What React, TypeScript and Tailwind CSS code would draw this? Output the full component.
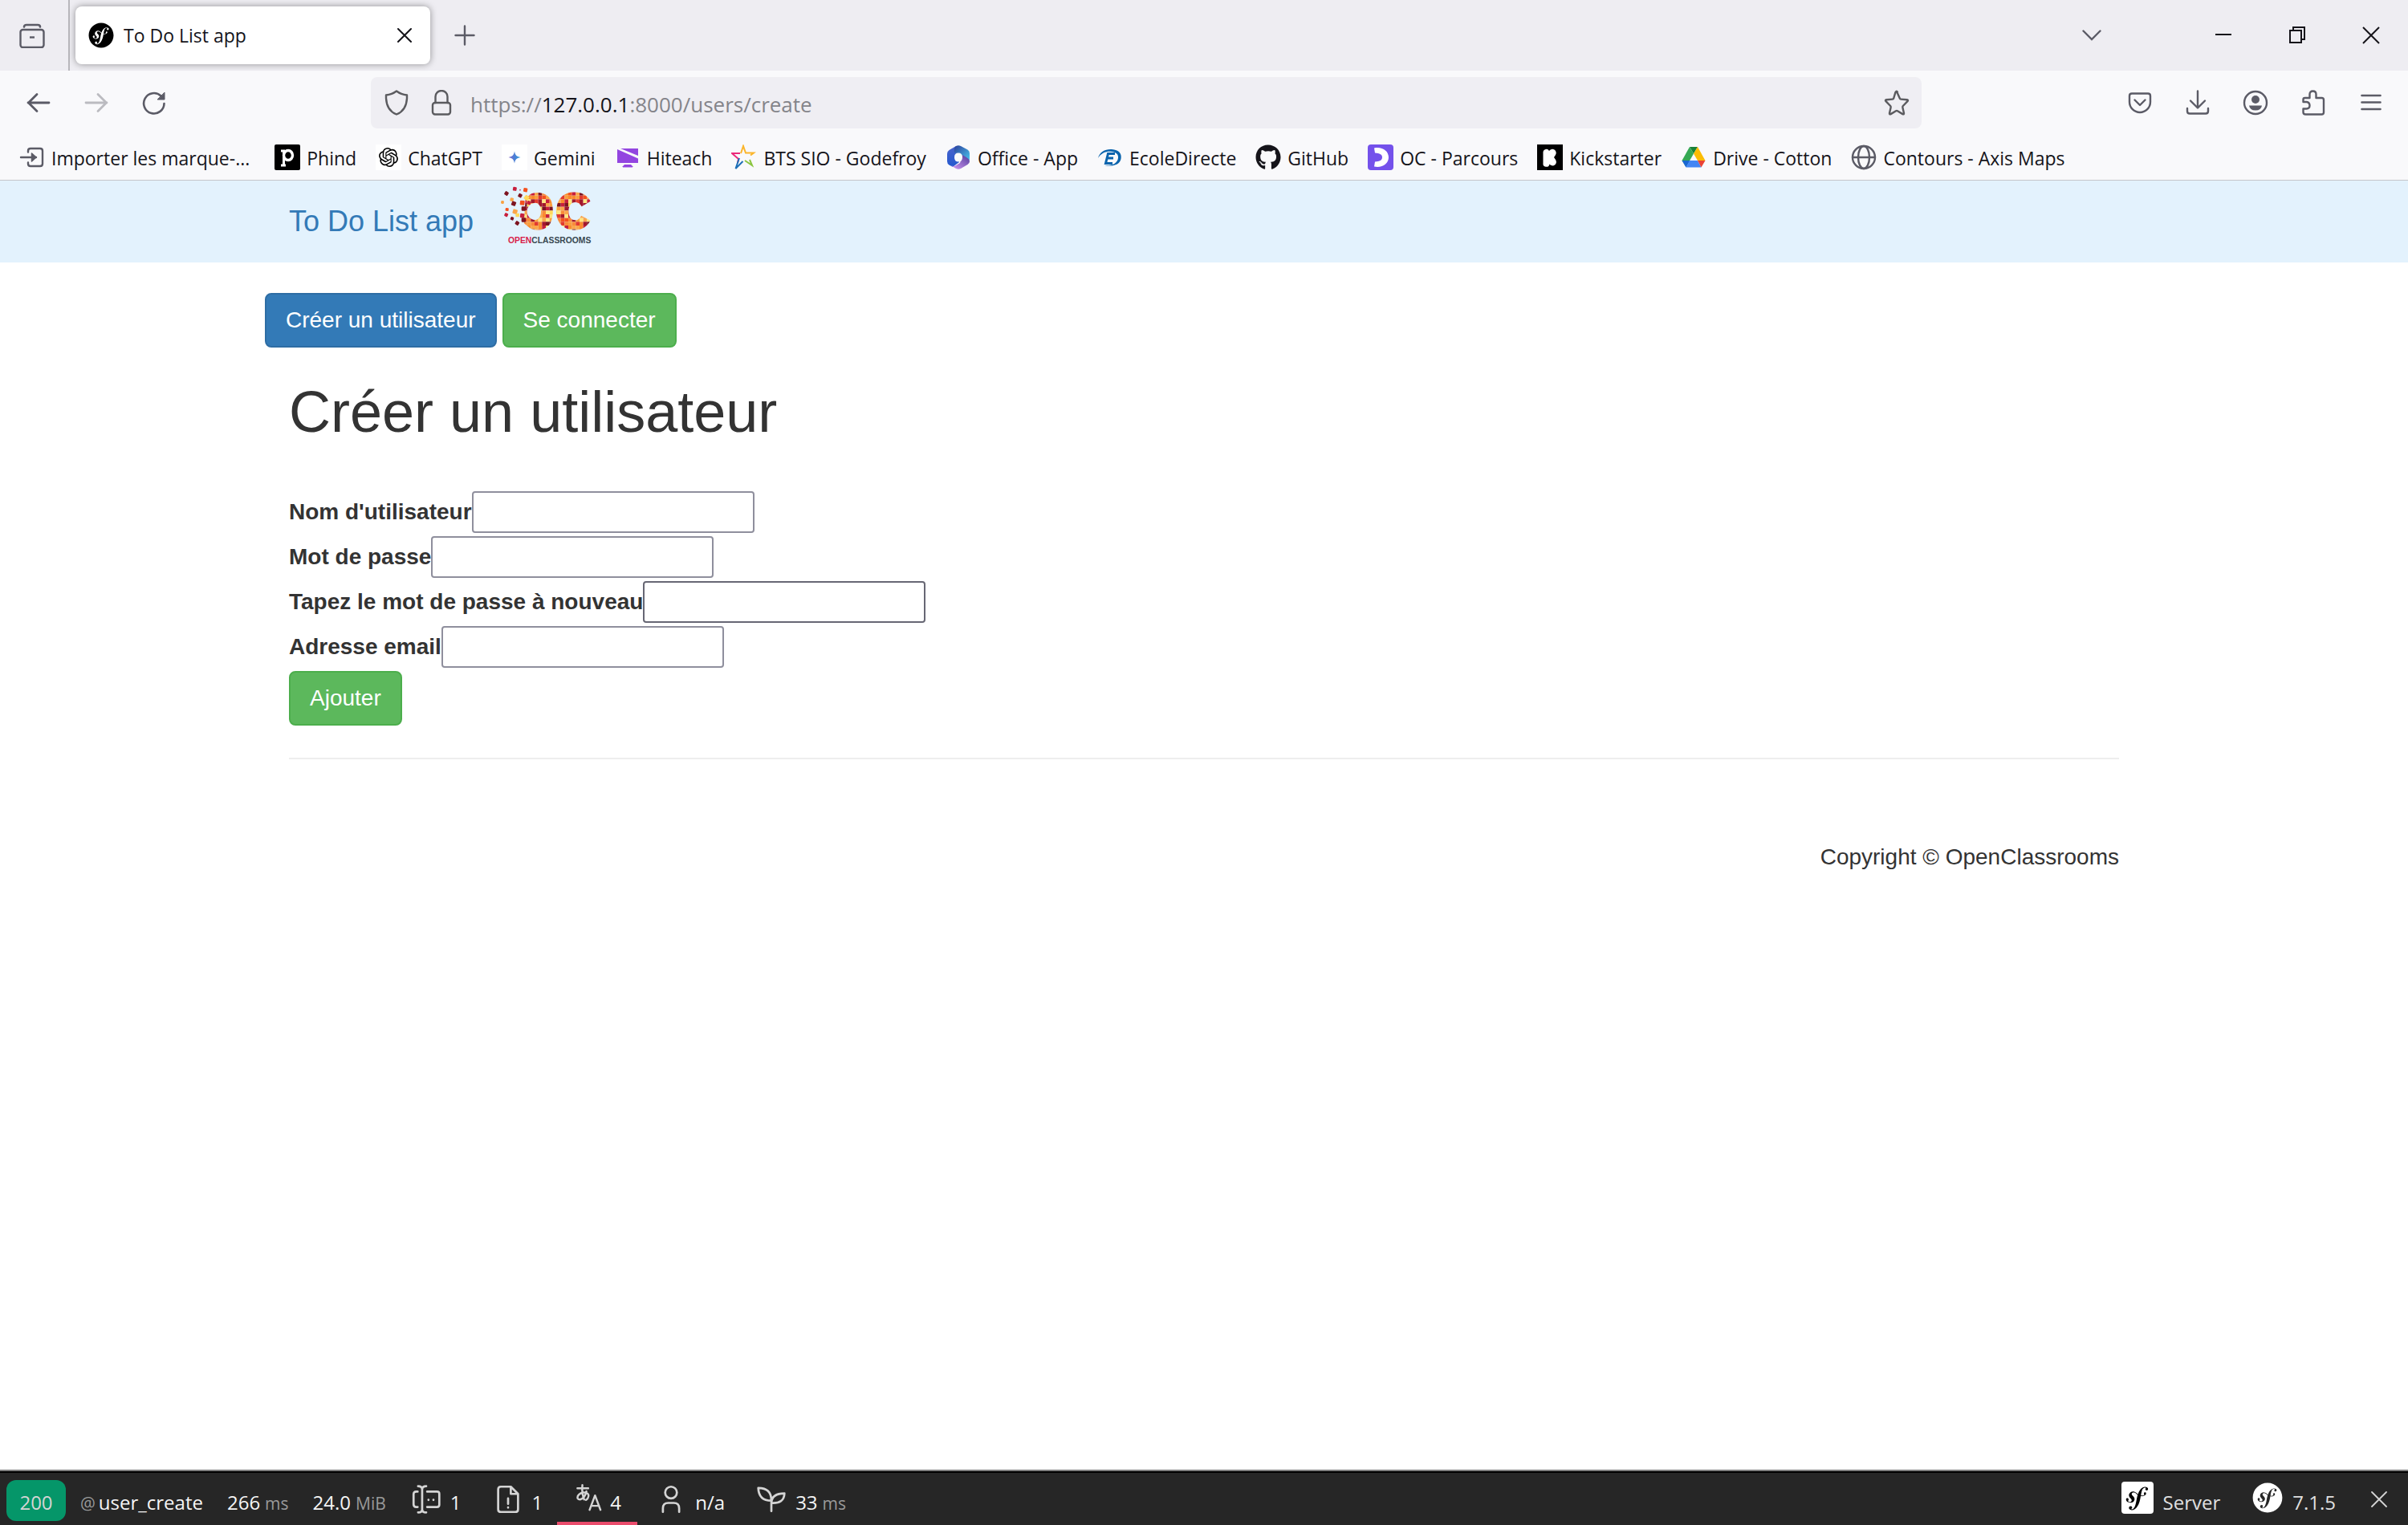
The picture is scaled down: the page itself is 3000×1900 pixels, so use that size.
import type { ReactNode } from 'react';
import { FaSymfony, FaGithub } from 'react-icons/fa';
import { SiOpenai } from 'react-icons/si';

type IconProps = { className?: string; children: ReactNode };

/* Line icon drawn on a 32-unit grid */
function Line({ className = 'size-8', children }: IconProps) {
  return (
    <svg viewBox="0 0 32 32" className={`shrink-0 ${className}`} fill="none" stroke="currentColor" strokeWidth="2.4" strokeLinecap="round" strokeLinejoin="round" aria-hidden="true">
      {children}
    </svg>
  );
}

function Art({ children }: IconProps) {
  return (
    <svg viewBox="0 0 32 32" className="size-8 shrink-0" aria-hidden="true">
      {children}
    </svg>
  );
}

const bookmarks: { label: string; icon: ReactNode }[] = [
  {
    label: 'Phind',
    icon: (
      <Art>
        <rect width="32" height="32" rx="2" fill="#000" />
        <path d="M8 8h3.5v18M8 26h6" fill="none" stroke="#fff" strokeWidth="3" />
        <ellipse cx="17" cy="13.5" rx="5.5" ry="6" fill="none" stroke="#fff" strokeWidth="3.4" />
      </Art>
    ),
  },
  {
    label: 'ChatGPT',
    icon: (
      <span className="flex size-8 shrink-0 items-center justify-center bg-white text-black">
        <SiOpenai className="size-6" />
      </span>
    ),
  },
  {
    label: 'Gemini',
    icon: (
      <Art>
        <defs>
          <linearGradient id="gem" x1="0" x2="1">
            <stop offset="0" stopColor="#8668c9" />
            <stop offset=".5" stopColor="#4a7fd6" />
            <stop offset="1" stopColor="#36a3dd" />
          </linearGradient>
        </defs>
        <rect width="32" height="32" fill="#fff" />
        <path d="M16 8.500c1 5 2.500 6.500 7.500 7.500-5 1-6.500 2.500-7.500 7.500-1-5-2.500-6.500-7.500-7.500 5-1 6.500-2.500 7.500-7.500z" fill="url(#gem)" />
      </Art>
    ),
  },
  {
    label: 'Hiteach',
    icon: (
      <Art>
        <path d="M7 5h22v9zM3 6l26 11.500V23H3zM12 25h8l3 3H9z" fill="#9345e0" />
        <path d="M10 28.500h12" stroke="#c9a3f0" strokeWidth="1" />
      </Art>
    ),
  },
  {
    label: 'BTS SIO - Godefroy',
    icon: (
      <Art>
        <g fill="none" strokeWidth="2" strokeLinejoin="miter">
          <path d="M12 11l3-9 3 8.500h10l-4 3" stroke="#fbb52b" />
          <path d="M11 11H1l8 7-1 5" stroke="#ec2a7b" />
          <path d="M10 17L5.500 30l9-9" stroke="#1d6fb7" />
          <path d="M17 20l9 6-3-7" stroke="#8bc540" />
        </g>
      </Art>
    ),
  },
  {
    label: 'Office - App',
    icon: (
      <Art>
        <defs>
          <linearGradient id="ofa" x1="0" y1="0" x2="0" y2="1">
            <stop offset="0" stopColor="#4a63cc" />
            <stop offset="1" stopColor="#2358cf" />
          </linearGradient>
          <linearGradient id="ofb" x1="0" y1="0" x2="1" y2="1">
            <stop offset="0" stopColor="#2b3f9c" />
            <stop offset="1" stopColor="#4cc9f0" />
          </linearGradient>
          <linearGradient id="ofc" x1="1" y1="0" x2="0" y2="1">
            <stop offset="0" stopColor="#4f3a9b" />
            <stop offset="1" stopColor="#d59bf4" />
          </linearGradient>
        </defs>
        <path d="M13 2L4.500 7Q2 8.500 2 11.500V21q0 3 2.500 4.500L9 28l8-6V9z" fill="url(#ofa)" />
        <path d="M13 2q3-1.500 6 0l8.500 4.500Q30 8 30 11v10q0-2-2-3l-12-6-5-2q-1-6 2-8z" fill="url(#ofb)" />
        <path d="M21 13l6.500 4Q30 18.500 30 21q0 2.500-2.500 4L19 30q-3 1.500-6 0l-6-3.500q4 1 6-.5l5-3z" fill="url(#ofc)" />
        <path d="M16 10.500q5 0 5 5.500t-5 5.500-5-5.500 5-5.500z" fill="#f9f9fb" />
      </Art>
    ),
  },
  {
    label: 'EcoleDirecte',
    icon: (
      <Art>
        <path d="M1 17C3 9 10 5.500 18 6c9 .5 13 5.500 11.500 12C28 25 20 28 9 26c11 .5 16-3 17-9 .8-5-3-8-9.500-8.300C10 8.500 4.500 11 1 17z" fill="#0b64ad" />
        <path d="M22 11.500h-8.500l-3 12H19M12.500 17H20" fill="none" stroke="#0b64ad" strokeWidth="3" />
      </Art>
    ),
  },
  { label: 'GitHub', icon: <FaGithub className="size-8 shrink-0 text-[#15141a]" /> },
  {
    label: 'OC - Parcours',
    icon: (
      <Art>
        <rect width="32" height="32" rx="4" fill="#7451eb" />
        <path d="M8 4.500C18 2.500 26 8 26 16S18 29.500 8 27.500l1-6c6-.5 9-2 9-5.500s-3-5-9-5.500z" fill="#fff" />
      </Art>
    ),
  },
  {
    label: 'Kickstarter',
    icon: (
      <Art>
        <rect width="32" height="32" fill="#000" />
        <path d="M7.500 9.500a4 4 0 0 1 7.500-1.500 4.500 4.500 0 0 1 8 5l-2 3 2 3a4.500 4.500 0 0 1-7.500 5.500 4 4 0 0 1-8-1.500z" fill="#fff" />
      </Art>
    ),
  },
  {
    label: 'Drive - Cotton',
    icon: (
      <Art>
        <path d="M11 3h10l-5 8.500z" fill="#188038" />
        <path d="M11 3l5 8.500L6.500 28 1.500 20z" fill="#34a853" />
        <path d="M21 3l9.500 17H21L16 11.500z" fill="#fbbc04" />
        <path d="M1.500 20h10L6.500 28.500z" fill="#1967d2" />
        <path d="M11 20h10l4.500 8.500h-19z" fill="#4285f4" />
        <path d="M21 20h9.500l-5 8.500z" fill="#ea4335" />
      </Art>
    ),
  },
  {
    label: 'Contours - Axis Maps',
    icon: (
      <Line className="size-8 text-[#5b5b66]">
        <circle cx="16" cy="16" r="14" />
        <ellipse cx="16" cy="16" rx="7" ry="14" />
        <path d="M2 16h28" />
      </Line>
    ),
  },
];

const palette = ['#fa8b2d', '#c71f3d', '#ffd95c', '#f4511e', '#7d1420', '#fba64b', '#f9a03f', '#e23b2e', '#ffe680', '#f98b3a', '#a3182c'];
const fragments: [number, number, number, number][] = [
  [70, 22, 14, 1], [110, 26, 15, 3], [39, 39, 14, 4], [90, 47, 14, 4], [114, 55, 17, 2],
  [59, 62, 13, 5], [24, 72, 11, 6], [66, 77, 16, 4], [98, 74, 17, 3], [41, 99, 12, 3],
  [71, 107, 17, 5], [103, 96, 16, 4], [38, 119, 13, 1], [80, 120, 14, 2], [98, 122, 16, 1],
  [60, 133, 12, 4], [103, 138, 16, 4], [79, 150, 14, 4], [123, 74, 14, 1], [90, 26, 5, 1],
];
const cells = Array.from({ length: 11 * 18 }, (_, i) => {
  const col = i % 18;
  const row = Math.floor(i / 18);
  return { x: 102 + col * 14, y: 33 + row * 14, fill: palette[(col * col * 3 + row * 5 + col * row * 2 + ((row * 7) % 3)) % 11] };
});

function OpenClassroomsLogo() {
  return (
    <svg viewBox="0 0 372 246" className="h-[82px] w-[124px]" role="img" aria-label="OpenClassrooms">
      <defs>
        <clipPath id="oc">
          <path clipRule="evenodd" d="M128 42C150 32 184 34 202 58C216 84 216 126 202 152C184 178 150 182 126 168L104 150L110 60zM146 74C126 76 116 90 116 106C116 124 128 138 146 138C160 138 168 124 168 106C168 88 160 74 146 74z" />
          <path d="M353 68C340 44 318 34 292 34C250 34 225 64 225 106C225 146 250 176 292 176C320 176 340 164 353 140L318 122C312 136 304 139 296 139C278 139 271 124 271 106C271 86 280 72 296 72C306 72 314 78 320 88z" />
        </clipPath>
      </defs>
      <g clipPath="url(#oc)">
        {cells.map((c) => (
          <rect key={`${c.x}-${c.y}`} x={c.x} y={c.y} width="14" height="14" fill={c.fill} />
        ))}
      </g>
      {fragments.map(([x, y, s, c]) => (
        <rect key={`${x}-${y}`} x={x - s / 2} y={y - s / 2} width={s} height={s} rx="3" fill={palette[c]} transform={`rotate(${(x * 7) % 40} ${x} ${y})`} />
      ))}
      <text x="45" y="225" fontFamily="Liberation Sans, sans-serif" fontWeight="700" fontSize="31" fill="#37474f">
        <tspan fill="#d81e4a">OPEN</tspan>CLASSROOMS
      </text>
    </svg>
  );
}

function BrowserChrome() {
  return (
    <header className="font-['Open_Sans','Noto_Sans',sans-serif] text-[23px] text-[#15141a]">
      <div className="flex h-[88px] items-stretch bg-[#eeedf2]">
        <button aria-label="Vue des onglets" className="flex w-[87px] items-center border-r-2 border-[#b8b7bc] pl-6 text-[#5b5b66]">
          <Line>
            <path d="M6 5.500Q6 3 9 3h14q3 0 3 2.500" strokeWidth="2.600" />
            <rect x="1.5" y="9" width="29" height="22" rx="3" />
            <path d="M13 18.500h6" strokeLinecap="butt" />
          </Line>
        </button>
        <div className="my-2 ml-[7px] flex w-[442px] items-center rounded-lg bg-white pr-[22px] pl-4 shadow-[0_0_8px_rgba(0,0,0,0.4)]">
          <FaSymfony className="size-8 shrink-0 text-black" />
          <span className="ml-3 flex-1">To Do List app</span>
          <button aria-label="Fermer l’onglet">
            <svg viewBox="0 0 20 20" className="size-5" fill="none" stroke="currentColor" strokeWidth="2" strokeLinecap="round"><path d="M2 2l16 16M18 2L2 18" /></svg>
          </button>
        </div>
        <button aria-label="Nouvel onglet" className="ml-[27px] text-[#5b5b66]">
          <Line><path d="M16 4.500v23M4.500 16h23" /></Line>
        </button>
        <div className="ml-auto flex items-center gap-[60px] pr-[30px]">
          <button aria-label="Lister tous les onglets" className="mr-[76px] flex text-[#5b5b66]">
            <svg viewBox="0 0 24 24" className="size-6" fill="none" stroke="currentColor" strokeWidth="2.4" strokeLinecap="round"><path d="M1.500 6.500L12 17 22.500 6.500" /></svg>
          </button>
          <button aria-label="Réduire"><svg viewBox="0 0 32 32" className="size-8" stroke="currentColor" strokeWidth="2"><path d="M6 15h20" /></svg></button>
          <button aria-label="Restaurer">
            <svg viewBox="0 0 32 32" className="size-8" fill="none" stroke="currentColor" strokeWidth="2"><path d="M7 10h14v15H7zM11 10V6h14v15h-4" /></svg>
          </button>
          <button aria-label="Fermer">
            <svg viewBox="0 0 32 32" className="size-8" fill="none" stroke="currentColor" strokeWidth="2"><path d="M6 6l20 20M26 6L6 26" /></svg>
          </button>
        </div>
      </div>

      <div className="flex h-20 items-center bg-[#f9f9fb] text-[#5b5b66]">
        <div className="flex w-[462px] gap-10 pl-8">
          <button aria-label="Page précédente">
            <Line><path d="M29 16H3M14 5.500L3.500 16 14 26.500" strokeWidth="2.800" /></Line>
          </button>
          <button aria-label="Page suivante" className="text-[#bbbbc0]">
            <Line><path d="M3 16h26M18 5.500L28.500 16 18 26.500" strokeWidth="2.800" /></Line>
          </button>
          <button aria-label="Actualiser">
            <Line>
              <path d="M28.500 17a12.700 12.700 0 1 1-4-9.500" strokeWidth="2.600" />
              <path d="M29 3.500V12h-8.500z" fill="currentColor" strokeWidth="1" />
            </Line>
          </button>
        </div>
        <div className="flex h-16 flex-1 items-center rounded-lg bg-[#efeef3] pr-[15px] pl-4 text-[#5b5b5f]">
          <Line><path d="M16 1.500c4 3 8 4.500 13 5v4C28.500 20 25 27 16 30.500 7 27 3.500 20 3 10.500v-4c5-.5 9-2 13-5z" /></Line>
          <Line className="ml-6 size-8">
            <rect x="5" y="16" width="22" height="14.5" rx="3" />
            <path d="M8.500 16V8.500a7.500 7.500 0 0 1 15 0V16" />
          </Line>
          <a href="#" className="ml-5 flex-1 pt-1 text-[26px] text-[#84848a]">
            https://<span className="text-[#15141a]">127.0.0.1</span>:8000/users/create
          </a>
          <button aria-label="Marquer cette page">
            <Line><path d="M16 2l3.800 8.500q.4 1 1.500 1.100l7.500.7q2 .4.700 1.900l-5.700 5.800q-.7.800-.4 1.900l1.600 7q.2 2-1.600 1.200L17 26.300q-1-.6-2 0l-6.400 3.800q-1.800.8-1.600-1.200l1.600-7q.3-1.100-.4-1.900l-5.700-5.800q-1.300-1.500.7-1.900l7.500-.7q1.100-.1 1.500-1.100L14.500 2.800Q16 .5 17 3" /></Line>
          </button>
        </div>
        <div className="flex w-[606px] items-center justify-end gap-10 pr-[30px]">
          <button aria-label="Pocket">
            <Line><path d="M6 4.500h20q3 0 3 3V15a13 13 0 0 1-26 0V7.500q0-3 3-3zM9.500 12.500L16 19l6.500-6.500" /></Line>
          </button>
          <button aria-label="Téléchargements">
            <Line><path d="M16 1.500V22M7 13.500l9 9 9-9M3 23v3.500q0 3 3 3h20q3 0 3-3V23" /></Line>
          </button>
          <button aria-label="Compte">
            <Line>
              <circle cx="16" cy="16" r="14" />
              <circle cx="16" cy="12" r="5" fill="currentColor" stroke="none" />
              <path d="M8 19.500h16q-1 6-8 6t-8-6z" fill="currentColor" stroke="none" />
            </Line>
          </button>
          <button aria-label="Extensions">
            <Line><path d="M3.500 15v-3q0-2 2-2h6V5.500q0-4 4-4t4 4V10h7q2.500 0 2.500 2.500V28q0 2.500-2.500 2.500h-20Q3.500 30.500 3.500 28v-4.500h4q4 0 4-4t-4-4.500z" /></Line>
          </button>
          <button aria-label="Menu">
            <Line><path d="M4.500 7h23M4.500 15.500h23M4.500 24h23" strokeWidth="2.600" /></Line>
          </button>
        </div>
      </div>

      <nav aria-label="Marque-pages" className="flex h-[57px] items-center gap-6 border-b border-[#c5c5c9] bg-[#f9f9fb] px-6 whitespace-nowrap">
        <a href="#" className="mr-[7px] flex items-center gap-2">
          <Line className="size-8 text-[#5b5b66]">
            <path d="M11 9.500V8q0-3 3-3h12q3 0 3 3v16q0 3-3 3H14q-3 0-3-3v-1.500" />
            <path d="M2 16h19" />
            <path d="M15.500 11l5.500 5-5.500 5z" fill="currentColor" strokeWidth="1.500" />
          </Line>
          <span className="pt-0.5">Importer les marque-...</span>
        </a>
        {bookmarks.map((b) => (
          <a key={b.label} href="#" className="flex items-center gap-2">
            {b.icon}
            <span className="pt-0.5">{b.label}</span>
          </a>
        ))}
      </nav>
    </header>
  );
}

const fields = [
  { id: 'username', label: "Nom d'utilisateur", type: 'text', tone: 'border-[#8f8f9d]' },
  { id: 'password', label: 'Mot de passe', type: 'password', tone: 'border-[#8f8f9d]' },
  { id: 'password2', label: 'Tapez le mot de passe à nouveau', type: 'password', tone: 'border-[#676774]' },
  { id: 'email', label: 'Adresse email', type: 'email', tone: 'border-[#8f8f9d]' },
];

function Page() {
  return (
    <div className="font-['Liberation_Sans',Arial,sans-serif] text-[28px] leading-10 text-[#333]">
      <nav className="h-[102px] bg-[#e3f2fd]">
        <div className="mx-[330px] flex px-[30px]">
          <a href="#" className="pt-[31px] text-[36px] text-[#337ab7]">To Do List app</a>
          <a href="#" className="mt-[3px] ml-7"><OpenClassroomsLogo /></a>
        </div>
      </nav>
      <main className="mx-[330px] pt-[38px]">
        <div className="flex gap-[7px]">
          <a href="#" className="rounded-lg border-2 border-[#2e6da4] bg-[#337ab7] px-6 py-3 text-white">Créer un utilisateur</a>
          <a href="#" className="rounded-lg border-2 border-[#4cae4c] bg-[#5cb85c] px-6 py-3 text-white">Se connecter</a>
        </div>
        <div className="px-[30px]">
          <h1 className="mt-10 text-[72px] leading-[80px]">Créer un utilisateur</h1>
          <form className="mt-[59px]">
            {fields.map((f) => (
              <div key={f.id} className="mb-1 flex items-center">
                <label htmlFor={f.id} className="font-bold">{f.label}</label>
                <input id={f.id} type={f.type} className={`h-[52px] w-[352px] rounded border-2 bg-white px-1 ${f.tone}`} />
              </div>
            ))}
            <button type="button" className="rounded-lg border-2 border-[#4cae4c] bg-[#5cb85c] px-6 py-3 text-white">Ajouter</button>
          </form>
          <hr className="mt-10 border-t-2 border-[#eee]" />
          <footer className="mt-[102px] text-right">Copyright © OpenClassrooms</footer>
        </div>
      </main>
    </div>
  );
}

function Muted({ children }: { children: ReactNode }) {
  return <span className="text-[21px] text-[#999]">{children}</span>;
}

function DebugToolbar() {
  return (
    <footer className="mt-auto border-t-2 border-[#808080] font-['Open_Sans','Noto_Sans',sans-serif] text-[24px] text-[#f5f5f5]">
      <div className="flex h-[67px] items-stretch border-t-2 border-black bg-[#262626] pl-2">
        <span className="mt-[9px] flex h-[51px] w-[74px] items-center justify-center rounded-xl bg-[#059669] pt-1 text-[#d4d4d4]">200</span>
        <div className="flex items-baseline pt-[19px]">
          <a href="#" className="ml-[18px] flex items-baseline gap-1"><Muted>@</Muted>user_create</a>
          <a href="#" className="ml-[30px] flex items-baseline gap-[6px]">266<Muted>ms</Muted></a>
          <a href="#" className="ml-[30px] flex items-baseline gap-[6px]">24.0<Muted>MiB</Muted></a>
        </div>
        <a href="#" className="ml-8 flex items-center gap-3">
          <Line className="size-9 text-[#d4d4d4]">
            <path d="M6.500 7.500H5q-3 0-3 3v11q0 3 3 3h1.500M17 7.500h11q2.500 0 2.500 2.500v12q0 2.500-2.500 2.500H17M7 1.500q4.500 0 4.500 3.500v22q0 3.500-4.500 3.500M16 1.500q-4.500 0-4.500 3.500v22q0 3.500 4.500 3.500M18.500 16.500v.2M24 16.500v.2" />
          </Line>
          <span className="pt-2">1</span>
        </a>
        <a href="#" className="ml-10 flex items-center gap-3">
          <Line className="size-9 text-[#d4d4d4]">
            <path d="M19 2H8Q5 2 5 5v22q0 3 3 3h16q3 0 3-3V10zM19 2v8h8M16 15v6M16 25v.2" />
          </Line>
          <span className="pt-2">1</span>
        </a>
        <a href="#" className="ml-[18px] flex w-[100px] items-center gap-2 border-b-4 border-[#ea4c6c] pl-[22px]">
          <Line className="size-9 text-[#d4d4d4]">
            <g strokeWidth="2.2">
              <path d="M3 5.500h12M8.500 2q-1 9 2 16M13 9q-2 8-7 9-4 0-2.500-4 3-4.500 9-3.500 4.500 1.500 2 6-.8 1.200-2 2" />
              <path d="M16.500 29.500l6-16 6 16M18.500 25h8.500" />
            </g>
          </Line>
          <span className="pt-3">4</span>
        </a>
        <a href="#" className="ml-6 flex items-center gap-3">
          <Line className="size-9 text-[#d4d4d4]">
            <circle cx="16" cy="8.5" r="6.5" />
            <path d="M7 30v-4q0-6 6-6h6q6 0 6 6v4" />
          </Line>
          <span className="pt-2">n/a</span>
        </a>
        <a href="#" className="ml-10 flex items-center gap-3">
          <Line className="size-9 text-[#d4d4d4]">
            <path d="M16 29V17.500M16 17.500Q16 3.500 1.500 3.500 2 17.500 16 17.500zM16 20Q16.500 9.500 30.500 9.500 30 21 16 20z" />
          </Line>
          <span className="flex items-baseline gap-[6px] pt-2">33<Muted>ms</Muted></span>
        </a>
        <div className="ml-auto flex items-center pr-[26px]">
          <a href="#" className="flex items-center gap-3">
            <span className="mb-[3px] flex size-10 items-center justify-center overflow-hidden rounded bg-white">
              <span className="flex size-9 shrink-0 items-center justify-center rounded-full bg-black">
                <FaSymfony className="size-11 shrink-0 text-white" />
              </span>
            </span>
            <span className="pt-2 text-[#e0e0e0]">Server</span>
          </a>
          <a href="#" className="ml-10 flex items-center gap-3">
            <FaSymfony className="mb-[3px] size-[38px] text-white" />
            <span className="pt-2 text-[#e0e0e0]">7.1.5</span>
          </a>
          <button aria-label="Fermer la barre" className="ml-11">
            <svg viewBox="0 0 20 20" className="size-5" fill="none" stroke="#d4d4d4" strokeWidth="1.8" strokeLinecap="round"><path d="M1 1l18 18M19 1L1 19" /></svg>
          </button>
        </div>
      </div>
    </footer>
  );
}

export default function App() {
  return (
    <div className="flex min-h-screen flex-col bg-white">
      <BrowserChrome />
      <Page />
      <DebugToolbar />
    </div>
  );
}
